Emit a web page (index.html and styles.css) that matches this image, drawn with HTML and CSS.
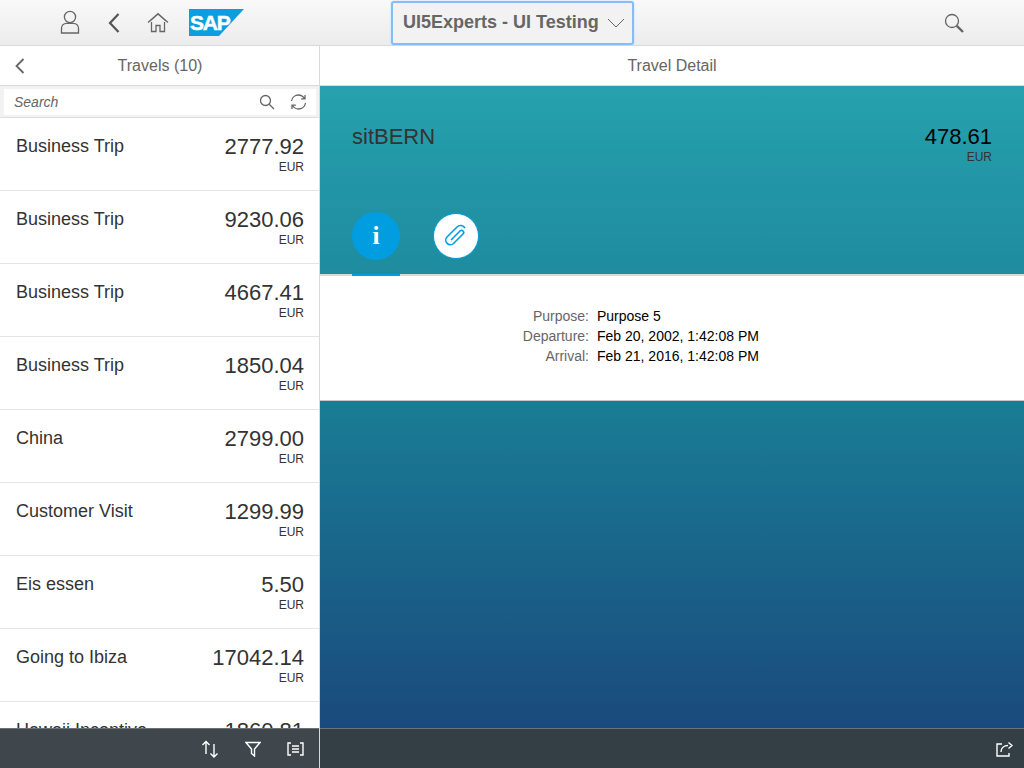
FILE: index.html
```html
<!DOCTYPE html>
<html>
<head>
<meta charset="utf-8">
<title>UI5Experts - UI Testing</title>
<link rel="stylesheet" href="styles.css">
</head>
<body>
<div class="shell-bar">
	<div class="shell-left">
		<svg class="ico ico-user" width="20" height="24" viewBox="0 0 20 24"><circle cx="10" cy="7" r="5.6"/><path d="M1.500 23v-4.500c0-3 2.200-5.200 5.200-5.200h6.600c3 0 5.200 2.200 5.200 5.200V23z"/></svg>
		<svg class="ico ico-back" width="14" height="22" viewBox="0 0 14 22"><path d="M11.500 2 3 11l8.500 9"/></svg>
		<svg class="ico ico-home" width="22" height="21" viewBox="0 0 22 21"><path d="M1 10.500 11 1.500l10 9M3 9l8-7 8 7M4.500 10v9.500h4.500v-6h4v6h4.500V10"/></svg>
		<svg class="logo" width="55" height="27" viewBox="0 0 55 27"><polygon points="0,0 55,0 30,27 0,27" fill="#0a9fdf"/><text x="1" y="21" class="logo-text">SAP</text></svg>
	</div>
	<button class="app-title">UI5Experts - UI Testing
		<svg class="ico chevron" width="18" height="10" viewBox="0 0 18 10"><path d="M1 1l8 8 8-8"/></svg>
	</button>
	<svg class="ico shell-search" width="20" height="20" viewBox="0 0 20 20"><circle cx="8" cy="8" r="6.500"/><path d="M12.800 12.800 19 19" class="thick"/></svg>
</div>
<div class="main">
	<div class="master">
		<div class="page-head">
			<svg class="ico head-back" width="10" height="16" viewBox="0 0 10 16"><path d="M8.500 1 1.500 8l7 7"/></svg>
			Travels (10)
		</div>
		<div class="search-wrap">
			<div class="search">
				<span class="search-text">Search</span>
				<svg class="ico" width="16" height="16" viewBox="0 0 16 16"><circle cx="6.500" cy="6.500" r="5"/><path d="M10.200 10.200 15 15"/></svg>
				<svg class="ico" width="17" height="16" viewBox="0 0 17 16"><path d="M1.500 7C2 3.500 5 1 8.500 1c2.500 0 4.500 1.200 6 3.500M15.500 9c-.5 3.500-3.500 6-7 6-2.500 0-4.500-1.200-6-3.500M15 1v3.800h-3.800M2 15v-3.800h3.800"/></svg>
			</div>
		</div>
		<div class="list">
			<div class="row"><span class="row-name">Business Trip</span><div class="row-price"><span class="amount">2777.92</span><span class="cur">EUR</span></div></div>
			<div class="row"><span class="row-name">Business Trip</span><div class="row-price"><span class="amount">9230.06</span><span class="cur">EUR</span></div></div>
			<div class="row"><span class="row-name">Business Trip</span><div class="row-price"><span class="amount">4667.41</span><span class="cur">EUR</span></div></div>
			<div class="row"><span class="row-name">Business Trip</span><div class="row-price"><span class="amount">1850.04</span><span class="cur">EUR</span></div></div>
			<div class="row"><span class="row-name">China</span><div class="row-price"><span class="amount">2799.00</span><span class="cur">EUR</span></div></div>
			<div class="row"><span class="row-name">Customer Visit</span><div class="row-price"><span class="amount">1299.99</span><span class="cur">EUR</span></div></div>
			<div class="row"><span class="row-name">Eis essen</span><div class="row-price"><span class="amount">5.50</span><span class="cur">EUR</span></div></div>
			<div class="row"><span class="row-name">Going to Ibiza</span><div class="row-price"><span class="amount">17042.14</span><span class="cur">EUR</span></div></div>
			<div class="row"><span class="row-name">Hawaii Incentive</span><div class="row-price"><span class="amount">1860.81</span><span class="cur">EUR</span></div></div>
		</div>
		<div class="footer footer-master">
			<svg class="ico-w" width="18" height="18" viewBox="0 0 18 18"><path d="M5 14V1.500M1.500 5 5 1.500 8.500 5M13 4v13M9.500 13.500 13 17l3.500-3.500"/></svg>
			<svg class="ico-w" width="16" height="16" viewBox="0 0 16 16"><path d="M1 1.500h14L9.500 8v7L6.500 12.500V8z"/></svg>
			<svg class="ico-w" width="17" height="14" viewBox="0 0 17 14"><path d="M4 1H1v12h3M13 1h3v12h-3M5 4h7M5 7h7M5 10h7"/></svg>
		</div>
	</div>
	<div class="detail">
		<div class="page-head">Travel Detail</div>
		<div class="detail-body">
			<div class="object-head">
				<div class="object-top">
					<span class="object-title">sitBERN</span>
					<div class="object-price"><span class="object-amount">478.61</span><span class="cur">EUR</span></div>
				</div>
				<div class="tabs">
					<div class="tab tab-on"><span class="tab-circle circle-info">i</span></div>
					<div class="tab"><span class="tab-circle circle-clip">
						<svg width="26" height="26" viewBox="0 0 26 26" class="clip"><path d="M8 17 17 8a2.100 2.100 0 0 1 3 3L10.500 20.500a4.600 4.600 0 0 1-6.500-6.500L14 4a5 5 0 0 1 8 1"/></svg>
					</span></div>
				</div>
			</div>
			<div class="info">
				<div class="info-row"><span class="info-label">Purpose:</span><span>Purpose 5</span></div>
				<div class="info-row"><span class="info-label">Departure:</span><span>Feb 20, 2002, 1:42:08 PM</span></div>
				<div class="info-row"><span class="info-label">Arrival:</span><span>Feb 21, 2016, 1:42:08 PM</span></div>
			</div>
		</div>
		<div class="footer footer-detail">
			<svg class="ico-w" width="17" height="16" viewBox="0 0 17 16"><path d="M6 3H1v12h12v-3M5 11c0-4 3-6.500 7-6.500M12.500 1.500 16 4.500l-3.500 3"/></svg>
		</div>
	</div>
</div>
</body>
</html>
```
FILE: styles.css
```css
html, body {
	margin: 0;
	padding: 0;
	height: 100%;
	overflow: hidden;
}
body {
	display: flex;
	flex-direction: column;
	font-family: "Liberation Sans", Arial, sans-serif;
	background: #fff;
	color: #333;
}
.ico path, .ico circle {
	fill: none;
	stroke: #666;
	stroke-width: 1.3;
}
.ico-w path {
	fill: none;
	stroke: #fff;
	stroke-width: 1.4;
}

/* shell */
.shell-bar {
	height: 46px;
	box-sizing: border-box;
	flex: none;
	display: flex;
	align-items: center;
	background: linear-gradient(#f9f9f9, #ececec);
	border-bottom: 1px solid #d9d9d9;
}
.shell-left {
	display: flex;
	align-items: center;
	margin-left: 60px;
}
.ico-user { margin-right: 27px; margin-top: -1px; }
.ico-back { margin-right: 26px; }
.ico-back path { stroke-width: 2.2; stroke: #555; }
.ico-home { margin-right: 20px; }
.logo { margin-top: -1px; }
.logo-text {
	font-size: 21px;
	font-weight: bold;
	fill: #fff;
	stroke: #fff;
	stroke-width: .5;
	letter-spacing: -1.2px;
}
.app-title {
	width: 243px;
	height: 44px;
	box-sizing: border-box;
	margin: 0 0 0 147px;
	padding: 0 0 0 10px;
	display: flex;
	align-items: center;
	gap: 8px;
	background: #f2f2f2;
	border: 2px solid #85bdf7;
	border-radius: 3px;
	box-shadow: 0 0 2px #b7d8fb;
	font: bold 18px "Liberation Sans", Arial, sans-serif;
	color: #666;
	white-space: nowrap;
}
.chevron path { stroke-width: 1; }
.shell-search {
	margin-left: auto;
	margin-right: 60px;
}
.shell-search .thick { stroke-width: 2.4; }

/* columns */
.main {
	flex: 1;
	display: flex;
	min-height: 0;
}
.master {
	width: 320px;
	flex: none;
	box-sizing: border-box;
	border-right: 1px solid #d9d9d9;
	display: flex;
	flex-direction: column;
}
.detail {
	flex: 1;
	display: flex;
	flex-direction: column;
}
.page-head {
	position: relative;
	flex: none;
	height: 39px;
	line-height: 39px;
	text-align: center;
	font-size: 16px;
	color: #666;
	background: #fff;
	border-bottom: 1px solid #d9d9d9;
}
.master .page-head {
	padding-left: 1px;
}
.head-back {
	position: absolute;
	left: 15px;
	top: 12px;
}
.head-back path { stroke-width: 1.8; }
.search-wrap {
	flex: none;
	height: 32px;
	padding: 3px 3px 0 4px;
	box-sizing: border-box;
	background: #f2f2f2;
	border-bottom: 1px solid #e0e0e0;
}
.search {
	height: 26px;
	padding: 0 9px 0 10px;
	display: flex;
	align-items: center;
	gap: 15px;
	background: #fff;
}
.search-text {
	flex: 1;
	font-size: 14px;
	font-style: italic;
	color: #666;
}

/* list */
.list {
	flex: 1;
	min-height: 0;
	overflow: hidden;
}
.row {
	height: 72px;
	padding: 0 15px 0 16px;
	display: flex;
	justify-content: space-between;
	border-bottom: 1px solid #e5e5e5;
}
.row-name {
	margin-top: 18px;
	font-size: 18px;
	line-height: 21px;
	color: #333;
}
.row-price {
	margin-top: 16px;
	display: flex;
	flex-direction: column;
	align-items: flex-end;
}
.amount {
	font-size: 22px;
	line-height: 26px;
	color: #333;
}
.cur {
	font-size: 12px;
	line-height: 14px;
	color: #333;
}

/* footer */
.footer {
	flex: none;
	height: 40px;
	box-sizing: border-box;
	display: flex;
	align-items: center;
	justify-content: flex-end;
	background: #3f474d;
	border-top: 1px solid #6b7278;
}
.footer-master {
	gap: 26px;
	padding-right: 15px;
}
.footer-detail {
	background: #343f45;
	padding-right: 11px;
}

/* detail */
.detail-body {
	flex: 1;
	min-height: 0;
	background: linear-gradient(#26a1ad, #197c95 50%, #1a4a7d);
}
.object-head {
	height: 190px;
	box-sizing: border-box;
	padding: 0 32px;
	border-bottom: 2px solid #d9d9d9;
	display: flex;
	flex-direction: column;
	justify-content: space-between;
}
.object-top {
	display: flex;
	justify-content: space-between;
	padding-top: 38px;
}
.object-title {
	font-size: 22px;
	line-height: 26px;
	color: #333;
}
.object-price {
	display: flex;
	flex-direction: column;
	align-items: flex-end;
}
.object-amount {
	font-size: 22px;
	line-height: 26px;
	color: #000;
}
.tabs {
	display: flex;
	gap: 32px;
}
.tab {
	width: 48px;
	height: 62px;
	box-sizing: border-box;
	display: flex;
	justify-content: center;
	align-items: flex-start;
}
.tab-on {
	height: 64px;
	border-bottom: 2px solid #009de0;
	margin-bottom: -2px;
}
.tab-circle {
	display: flex;
	align-items: center;
	justify-content: center;
	box-sizing: border-box;
}
.circle-info {
	width: 48px;
	height: 48px;
	border-radius: 50%;
	background: #009de0;
	color: #fff;
	font: bold 25px "Liberation Serif", serif;
}
.circle-clip {
	width: 46px;
	height: 46px;
	margin-top: 1px;
	border-radius: 50%;
	background: #fff;
	border: 1px solid #009de0;
}
.clip path {
	fill: none;
	stroke: #009de0;
	stroke-width: 1.6;
}
.info {
	height: 125px;
	box-sizing: border-box;
	padding-top: 30px;
	background: #fff;
	border-bottom: 1px solid #c8c8c8;
	font-size: 14px;
	line-height: 20px;
	color: #000;
}
.info-row {
	display: flex;
	gap: 8px;
}
.info-label {
	width: 269px;
	text-align: right;
	color: #666;
}
```
